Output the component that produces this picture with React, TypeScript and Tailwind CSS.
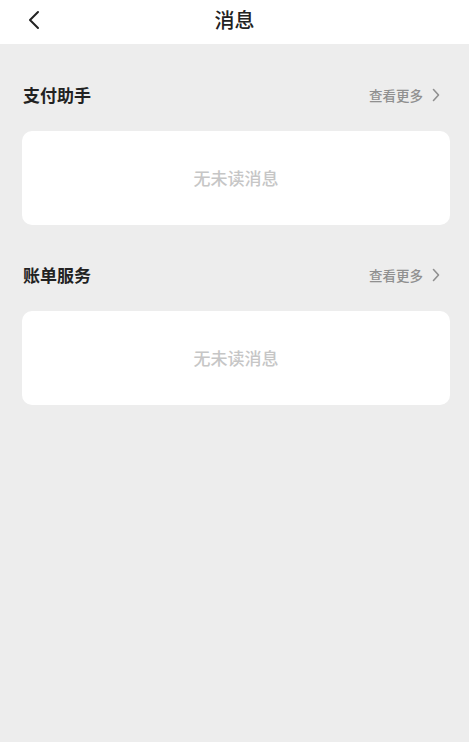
const font = { fontFamily: '"Noto Sans CJK SC", "Noto Sans", sans-serif' };

const Chevron = ({ className }: { className?: string }) => (
  <svg viewBox="0 0 8 14" className={className} fill="none" stroke="currentColor" strokeWidth={1.6} strokeLinecap="round" strokeLinejoin="round">
    <path d="M1.5 1.5 L6.5 7 L1.5 12.5" />
  </svg>
);

const Section = ({ title }: { title: string }) => (
  <section>
    <div className="h-[50px] flex items-center justify-between pl-[23px] pr-[29px]">
      <h2 className="text-[17px] font-bold text-[#222]">{title}</h2>
      <div className="flex items-center gap-[9px] text-[#909090]">
        <span className="text-[13.5px] font-medium">查看更多</span>
        <Chevron className="w-[8px] h-[14px]" />
      </div>
    </div>
    <div className="mt-[11px] ml-[22px] mr-[19px] h-[94px] bg-white rounded-[10px] flex items-center justify-center">
      <span className="text-[17px] font-medium text-[#c6c6c6]">无未读消息</span>
    </div>
  </section>
);

export default function App() {
  return (
    <div className="min-h-[742px] bg-[#ededed]" style={font}>
      <header className="h-[44px] bg-white flex items-center relative">
        <button className="absolute left-[24px] top-[8px] w-[20px] h-[24px] flex items-center justify-center text-[#222]">
          <svg viewBox="0 0 14 20" className="w-[14px] h-[20px]" fill="none" stroke="currentColor" strokeWidth={2} strokeLinecap="round" strokeLinejoin="round">
            <path d="M11 2 L3 10 L11 18" />
          </svg>
        </button>
        <h1 className="flex-1 text-center text-[20px] font-medium text-[#222] -mt-[4px]">消息</h1>
      </header>
      <main className="pt-[26px] flex flex-col gap-[25px]">
        <Section title="支付助手" />
        <Section title="账单服务" />
      </main>
    </div>
  );
}
